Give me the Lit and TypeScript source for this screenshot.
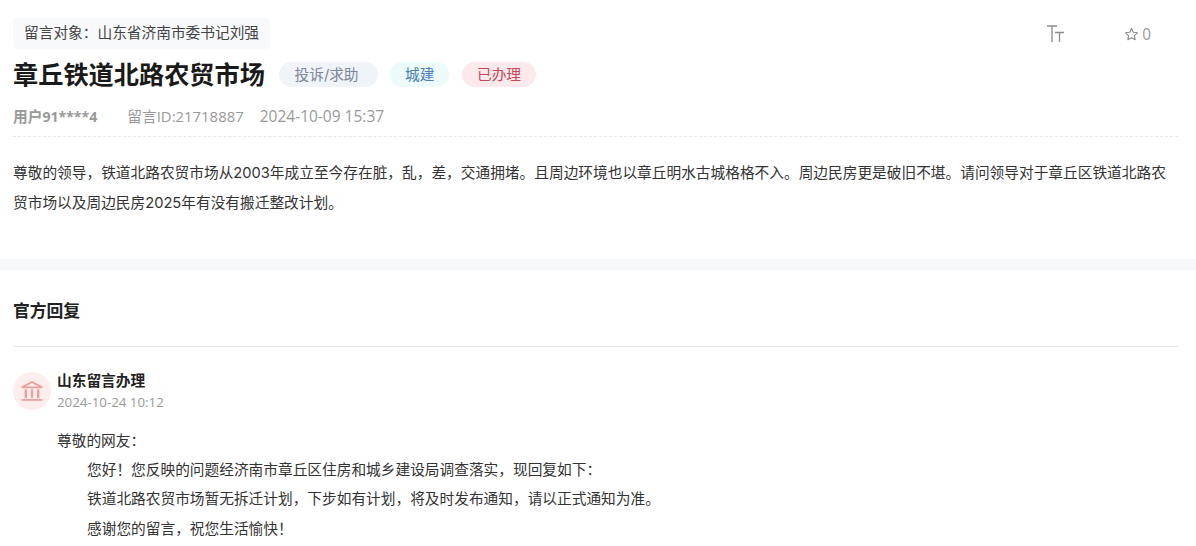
import { LitElement, html, css } from "lit";
import { customElement } from "lit/decorators.js";

@customElement("app-root")
export class AppRoot extends LitElement {
  static styles = css`
    :host {
      display: block;
      width: 1196px;
      height: 546px;
      overflow: hidden;
      background: #fff;
      font-family: Inter, "Noto Sans CJK SC", sans-serif;
      color: #333;
    }
    * { box-sizing: border-box; }
    .top { padding: 18px 18px 0 13px; height: 259px; }
    .head { display: flex; justify-content: space-between; align-items: flex-start; height: 32px; }
    .target {
      height: 31px; line-height: 31px; padding: 0 11px; background: #f7f9fb; border-radius: 3px;
      font-size: 14.7px; color: #444;
    }
    .tools { display: flex; align-items: center; height: 32px; color: #999; font-size: 15.4px; font-family: "Open Sans", sans-serif; padding-right: 27px; }
    .tt { display: block; margin: -1px 60px 0 0; }
    .star { display: flex; align-items: center; gap: 3px; }
    .title-row { display: flex; align-items: center; margin-top: 12px; height: 25px; }
    h1 { margin: 0 14px 0 0; height: 25px; font-size: 25.2px; line-height: 27px; font-weight: 700; color: #1a1a1a; width: 252px; white-space: nowrap; }
    .pill { height: 25px; line-height: 26px; padding: 0 15px; border-radius: 13px; font-size: 14.7px; margin-right: 12.5px; white-space: nowrap; }
    .p1 { background: #f0f3f8; color: #7b8798; padding: 0 19px 0 15.5px; }
    .p2 { background: #ecfbfa; color: #4a7fb5; }
    .p3 { background: #fbe9eb; color: #c8475a; }
    .meta { display: flex; align-items: baseline; height: 20px; margin-top: 19px; font-size: 14.7px; line-height: 20px; color: #999; }
    .meta b { color: #999; font-weight: 700; margin-right: 30px; }
    .meta span { margin-right: 16px; }
    .meta .num { margin: 0; font-family: "Open Sans", sans-serif; font-size: 14.1px; }
    .meta .id { margin: 0; font-family: "Open Sans", sans-serif; font-size: 14.9px; }
    .meta .date { font-family: "Open Sans", sans-serif; font-size: 15.5px; }
    .dash { border-top: 1px dashed #e8e8e8; margin-top: 10px; }
    .body { margin: 21px 0 0; font-size: 14.7px; line-height: 30px; color: #333; }
    .gap { height: 11px; background: #f7f8fa; }
    .reply { padding: 0 18px 0 13px; }
    h2 { margin: 0; height: 77px; padding-top: 29px; font-size: 16.8px; line-height: 24px; font-weight: 700; color: #222; border-bottom: 1px solid #e6e6e6; }
    .org { display: flex; align-items: center; margin-top: 23px; height: 42px; }
    .avatar { width: 38px; height: 38px; border-radius: 50%; background: #fdeeee; display: flex; align-items: center; justify-content: center; margin-right: 6px; }
    .org-name { font-size: 14.7px; font-weight: 700; line-height: 22px; color: #222; }
    .org-time { font-family: "Open Sans", sans-serif; font-size: 13.3px; line-height: 20px; color: #999; }
    .text { margin: 14.6px 0 0 44px; font-size: 14.7px; line-height: 29.4px; color: #333; }
    .text p { margin: 0; }
    .text .in { padding-left: 30px; }
  `;

  render() {
    return html`
      <div class="top">
        <div class="head">
          <div class="target">留言对象：山东省济南市委书记刘强</div>
          <div class="tools">
            <svg class="tt" width="17" height="17" viewBox="0 0 17 17" fill="none" stroke="#8c8c8c" stroke-width="1.3">
              <path d="M0 1H10M5 1V17M8 7.5H17M12.5 7.5V17" />
            </svg>
            <div class="star">
              <svg width="15" height="15" viewBox="0 0 16 16" fill="none" stroke="#8c8c8c" stroke-width="1.2" stroke-linejoin="round">
                <path d="M8 1.6l1.9 4 4.4.6-3.2 3 .8 4.3L8 11.4l-3.9 2.1.8-4.3-3.2-3 4.4-.6z" />
              </svg>
              <span>0</span>
            </div>
          </div>
        </div>
        <div class="title-row">
          <h1>章丘铁道北路农贸市场</h1>
          <span class="pill p1">投诉/求助</span>
          <span class="pill p2">城建</span>
          <span class="pill p3">已办理</span>
        </div>
        <div class="meta">
          <b>用户<span class="num">91****4</span></b>
          <span>留言<span class="id">ID:21718887</span></span>
          <span class="date">2024-10-09 15:37</span>
        </div>
        <div class="dash"></div>
        <p class="body">尊敬的领导，铁道北路农贸市场从2003年成立至今存在脏，乱，差，交通拥堵。且周边环境也以章丘明水古城格格不入。周边民房更是破旧不堪。请问领导对于章丘区铁道北路农贸市场以及周边民房2025年有没有搬迁整改计划。</p>
      </div>
      <div class="gap"></div>
      <div class="reply">
        <h2>官方回复</h2>
        <div class="org">
          <div class="avatar">
            <svg width="22" height="20" viewBox="0 0 22 20" fill="#ec9f9b">
              <path d="M11 0L21.5 5.6V7.2H0.5V5.6zM11 2L4.4 5.5H17.6z" fill-rule="evenodd" />
              <rect x="3.6" y="8.4" width="2.4" height="8.6" /><rect x="9.8" y="8.4" width="2.4" height="8.6" />
              <rect x="16" y="8.4" width="2.4" height="8.6" />
              <rect x="0.5" y="18" width="21" height="1.8" />
            </svg>
          </div>
          <div>
            <div class="org-name">山东留言办理</div>
            <div class="org-time">2024-10-24 10:12</div>
          </div>
        </div>
        <div class="text">
          <p>尊敬的网友：</p>
          <p class="in">您好！您反映的问题经济南市章丘区住房和城乡建设局调查落实，现回复如下：</p>
          <p class="in">铁道北路农贸市场暂无拆迁计划，下步如有计划，将及时发布通知，请以正式通知为准。</p>
          <p class="in">感谢您的留言，祝您生活愉快！</p>
        </div>
      </div>
    `;
  }
}
